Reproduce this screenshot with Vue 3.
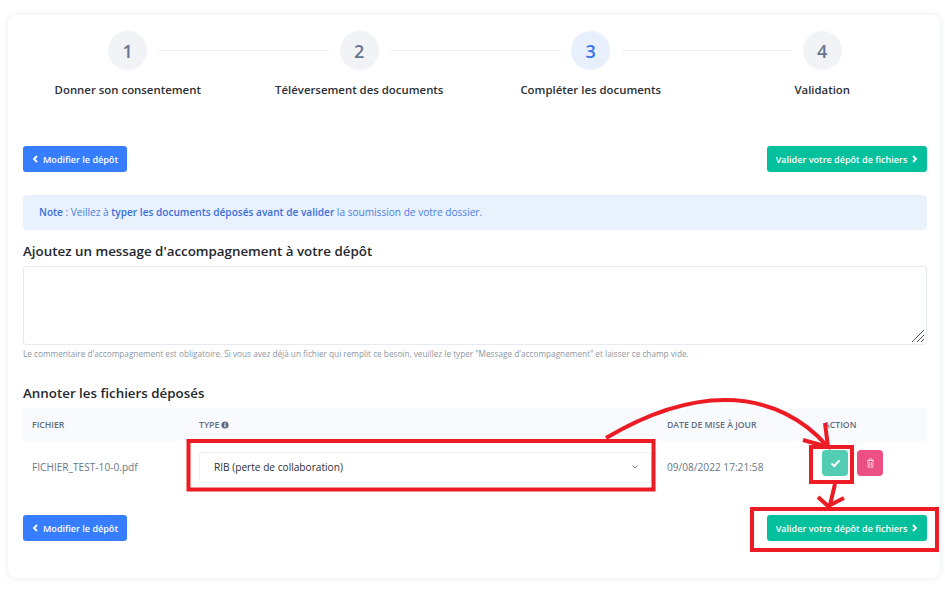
<script setup>
const steps = [
  { num: 1, label: 'Donner son consentement' },
  { num: 2, label: 'Téléversement des documents' },
  { num: 3, label: 'Compléter les documents', active: true },
  { num: 4, label: 'Validation' },
]
</script>

<template>
  <div class="page">
    <div class="card">
      <div class="steps">
        <div v-for="(s, i) in steps" :key="s.num" class="step">
          <div class="step-top">
            <span class="num" :class="{ active: s.active }">{{ s.num }}</span>
            <span v-if="i < 3" class="line"></span>
          </div>
          <div class="step-label">{{ s.label }}</div>
        </div>
      </div>

      <div class="actions first">
        <button class="btn blue">
          <svg width="7" height="8" viewBox="0 0 7 8"><path d="M5 1 2 4l3 3" fill="none" stroke="#fff" stroke-width="1.8"/></svg>
          Modifier le dépôt
        </button>
        <button class="btn green">
          Valider votre dépôt de fichiers
          <svg width="7" height="8" viewBox="0 0 7 8"><path d="M2 1l3 3-3 3" fill="none" stroke="#fff" stroke-width="1.8"/></svg>
        </button>
      </div>

      <div class="note">
        <b>Note</b> : Veillez à <strong>typer les documents déposés avant de valider</strong> la soumission de votre dossier.
      </div>

      <h3 class="title">Ajoutez un message d'accompagnement à votre dépôt</h3>
      <div class="message">
        <svg class="grip" width="14" height="14" viewBox="0 0 14 14"><path d="M1 13 13 1M6 13l7-7M10 13l3-3" fill="none" stroke="#555" stroke-width="1"/></svg>
      </div>
      <p class="help">Le commentaire d'accompagnement est obligatoire. Si vous avez déjà un fichier qui remplit ce besoin, veuillez le typer "Message d'accompagnement" et laisser ce champ vide.</p>

      <h3 class="title second">Annoter les fichiers déposés</h3>
      <div class="table">
        <div class="row head">
          <div>FICHIER</div>
          <div class="type-head">TYPE
            <svg width="8" height="8" viewBox="0 0 8 8"><circle cx="4" cy="4" r="3.6" fill="#5a6a7e"/><rect x="3.4" y="3.4" width="1.2" height="2.6" fill="#fff"/><rect x="3.4" y="1.8" width="1.2" height="1" fill="#fff"/></svg>
          </div>
          <div>DATE DE MISE À JOUR</div>
          <div>ACTION</div>
        </div>
        <div class="row body">
          <div class="file">FICHIER_TEST-10-0.pdf</div>
          <div class="select">
            <span>RIB (perte de collaboration)</span>
            <svg width="8" height="6" viewBox="0 0 8 6"><path d="M1.5 1.5 4 4l2.5-2.5" fill="none" stroke="#7b8794" stroke-width="1"/></svg>
          </div>
          <div class="file">09/08/2022 17:21:58</div>
          <div class="btns">
            <span class="icon-btn ok">
              <svg width="11" height="9" viewBox="0 0 11 9"><path d="M1.5 4.5 4.2 7l5.2-5.6" fill="none" stroke="#fff" stroke-width="2"/></svg>
            </span>
            <span class="icon-btn del">
              <svg width="9" height="10" viewBox="0 0 9 10"><path d="M1 2.5h7M3 2.5V1h3v1.5M1.8 2.5l.4 6.7h4.6l.4-6.7M3.5 4v3.8M5.5 4v3.8" fill="none" stroke="#f7c9d9" stroke-width="1"/></svg>
            </span>
          </div>
        </div>
      </div>

      <div class="actions last">
        <button class="btn blue">
          <svg width="7" height="8" viewBox="0 0 7 8"><path d="M5 1 2 4l3 3" fill="none" stroke="#fff" stroke-width="1.8"/></svg>
          Modifier le dépôt
        </button>
        <button class="btn green">
          Valider votre dépôt de fichiers
          <svg width="7" height="8" viewBox="0 0 7 8"><path d="M2 1l3 3-3 3" fill="none" stroke="#fff" stroke-width="1.8"/></svg>
        </button>
      </div>
    </div>

    <!-- annotations rouges par-dessus la capture -->
    <svg class="marks" width="945" height="590" viewBox="0 0 945 590">
      <g fill="none" stroke="#ed1c24" stroke-width="4">
        <rect x="188.5" y="441" width="465" height="48.5"/>
        <rect x="811" y="447" width="41" height="35"/>
        <rect x="752" y="509" width="185" height="41"/>
        <path d="M606 438C650 412 690 400 725 400C770 400 805 420 828 447"/>
        <path d="M825 423 828 447 803 440"/>
        <path d="M835 484 830 505"/>
        <path d="M818 497 828 506 844 498"/>
      </g>
    </svg>
  </div>
</template>

<style scoped>
.page {
  position: relative;
  width: 945px;
  height: 590px;
  padding: 15px 5px 0 8px;
  box-sizing: border-box;
  background: #fff;
  font-family: "Open Sans", sans-serif;
  overflow: hidden;
}
.card {
  height: 563px;
  padding: 16px 13px 0 15px;
  box-sizing: border-box;
  border-radius: 8px;
  background: #fff;
  box-shadow: 0 0 6px rgba(40, 60, 90, 0.1);
}
.steps {
  display: grid;
  grid-template-columns: repeat(4, 231.5px);
  margin-left: -11px;
}
.step {
  text-align: center;
}
.step-top {
  position: relative;
  display: flex;
  justify-content: center;
}
.num {
  display: flex;
  align-items: center;
  justify-content: center;
  width: 39px;
  height: 39px;
  border-radius: 50%;
  background: #f1f3f6;
  color: #66758f;
  font-size: 18px;
  font-weight: 600;
}
.num.active {
  background: #e8f0fd;
  color: #3b73e8;
}
.line {
  position: absolute;
  left: 146px;
  width: 171px;
  top: 19px;
  height: 1px;
  background: #eceef1;
}
.step-label {
  margin-top: 11px;
  font-size: 11.4px;
  line-height: 17px;
  font-weight: 600;
  color: #2b2f36;
}
.actions {
  display: flex;
  justify-content: space-between;
}
.actions.first {
  margin-top: 48px;
}
.actions.last {
  margin-top: 22px;
}
.btn {
  display: flex;
  align-items: center;
  justify-content: center;
  gap: 4px;
  height: 26px;
  border: none;
  border-radius: 3px;
  padding: 0;
  color: #fff;
  font-family: inherit;
  font-size: 9.05px;
  font-weight: 600;
}
.blue {
  width: 104px;
  background: #377dff;
}
.green {
  width: 160px;
  background: #05c09d;
}
.note {
  margin-top: 23px;
  height: 35px;
  padding-left: 16px;
  line-height: 35px;
  border-radius: 4px;
  background: #e9f1fd;
  color: #4a7fe0;
  font-size: 10.1px;
}
.note b,
.note strong {
  font-weight: 600;
  color: #3b6fd8;
}
.title {
  margin: 12px 0 0;
  color: #23272e;
  font-size: 13.35px;
  font-weight: 600;
  line-height: 19px;
}
.title.second {
  margin-top: 25px;
}
.message {
  position: relative;
  height: 79px;
  margin-top: 5px;
  box-sizing: border-box;
  border: 1px solid #e7eaf0;
  border-radius: 3px;
  background: #fff;
}
.grip {
  position: absolute;
  right: 1px;
  bottom: 1px;
}
.help {
  margin: 3px 0 0;
  color: #8c98a4;
  font-size: 8.22px;
  line-height: 11px;
}
.table {
  margin-top: 5px;
}
.row {
  display: grid;
  grid-template-columns: 167px 468px 157px 1fr;
  padding-left: 9px;
  align-items: center;
}
.head {
  height: 33px;
  background: #f8fafd;
  color: #5f6d80;
  font-size: 8.7px;
  font-weight: 600;
}
.type-head {
  display: flex;
  align-items: center;
  gap: 2px;
}
.body {
  height: 52px;
}
.file {
  color: #677788;
  font-size: 10.15px;
}
.select {
  display: flex;
  align-items: center;
  justify-content: space-between;
  width: 453px;
  height: 31px;
  padding: 0 12px 0 14px;
  box-sizing: border-box;
  border: 1px solid #eceff3;
  border-radius: 3px;
  color: #2b2f36;
  font-size: 10.15px;
}
.btns {
  display: flex;
  align-self: start;
  gap: 9px;
  margin: 9px 0 0 -2px;
}
.icon-btn {
  display: flex;
  align-items: center;
  justify-content: center;
  width: 26px;
  height: 26px;
  border-radius: 4px;
}
.ok {
  background: #52cdb4;
}
.del {
  background: #ec5082;
}
.marks {
  position: absolute;
  top: 0;
  left: 0;
  pointer-events: none;
}
</style>
